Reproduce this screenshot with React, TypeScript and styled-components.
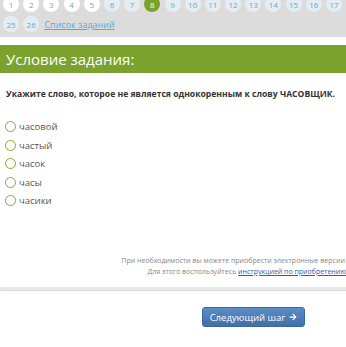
import React from 'react';
import styled, { createGlobalStyle } from 'styled-components';
import { FaArrowRight } from 'react-icons/fa';

const GlobalStyle = createGlobalStyle`
    html, body {
        margin: 0;
        padding: 0;
        background: #fff;
        overflow: hidden;
    }
    body {
        font-family: "Open Sans", "Liberation Sans", sans-serif;
    }
`;

const Page = styled.div`
    width: 507px;
    margin-top: -4px;
`;

const Nav = styled.div`
    background: #dcdcdc;
    padding: 0 12px 5px 3px;
    display: flex;
    flex-wrap: wrap;
    align-items: center;
    gap: 4px 4.2px;
`;

const Circle = styled.a<{ $kind: 'done' | 'todo' | 'active' }>`
    width: 16px;
    height: 16px;
    border-radius: 50%;
    display: inline-flex;
    align-items: center;
    justify-content: center;
    font-size: 8px;
    text-decoration: none;
    background: ${p => p.$kind === 'active' ? '#7aa22a' : p.$kind === 'done' ? '#ffffff' : '#e3edf2'};
    color: ${p => p.$kind === 'active' ? '#ffffff' : '#6aa6cf'};
`;

const ListLink = styled.a`
    margin-left: 1px;
    font-size: 9px;
    color: #5aaad8;
    text-decoration: underline;
`;

const Title = styled.div`
    margin-top: 8px;
    background: #7ba22d;
    color: #fff;
    height: 28px;
    display: flex;
    align-items: center;
    padding-left: 6px;
    font-size: 15px;
`;

const Question = styled.p`
    margin: 15px 0 20px 6px;
    font-size: 8.6px;
    font-weight: 700;
    color: #333;
`;

const Options = styled.div`
    display: flex;
    flex-direction: column;
    gap: 5.5px;
    padding-left: 5px;
`;

const Option = styled.label`
    display: flex;
    align-items: center;
    gap: 3px;
    font-size: 9.5px;
    color: #555;
    height: 13px;
`;

const Radio = styled.span`
    width: 9px;
    height: 9px;
    border-radius: 50%;
    border: 1.5px solid #8aab2e;
`;

const Note = styled.div`
    margin-top: 48px;
    padding-right: 143px;
    text-align: right;
    font-size: 7px;
    line-height: 11px;
    color: #888;
    white-space: nowrap;

    a {
        color: #2f5fa8;
        text-decoration: underline;
    }
`;

const Divider = styled.div`
    margin-top: 10px;
    height: 3px;
    background: #e8e8e8;
    box-shadow: 0 1px 1px #d8d8d8;
`;

const Footer = styled.div`
    display: flex;
    justify-content: center;
    padding: 17px 0 30px;
`;

const NextButton = styled.button`
    width: 103px;
    height: 20px;
    border: 1px solid #3b679c;
    border-radius: 3px;
    background: linear-gradient(#5c8cc6, #416fa9);
    color: #fff;
    font-family: inherit;
    font-size: 9.5px;
    display: flex;
    align-items: center;
    justify-content: center;
    gap: 4px;
    padding: 0;
`;

const words = ['часовой', 'частый', 'часок', 'часы', 'часики'];

function App() {
    const nums = Array.from({ length: 26 }, (_, i) => i + 1);
    return (
        <Page>
            <GlobalStyle />
            <Nav>
                {nums.map(n => (
                    <Circle key={n} $kind={n === 8 ? 'active' : n <= 5 ? 'done' : 'todo'}>{n}</Circle>
                ))}
                <ListLink>Список заданий</ListLink>
            </Nav>
            <Title>Условие задания:</Title>
            <Question>Укажите слово, которое не является однокоренным к слову ЧАСОВЩИК.</Question>
            <Options>
                {words.map(w => (
                    <Option key={w}><Radio />{w}</Option>
                ))}
            </Options>
            <Note>
                При необходимости вы можете приобрести электронные версии книг.<br />
                Для этого воспользуйтесь <a>инструкцией по приобретению ЭФУ</a>.
            </Note>
            <Divider />
            <Footer>
                <NextButton>Следующий шаг <FaArrowRight size={8} /></NextButton>
            </Footer>
        </Page>
    );
}

export default App;
